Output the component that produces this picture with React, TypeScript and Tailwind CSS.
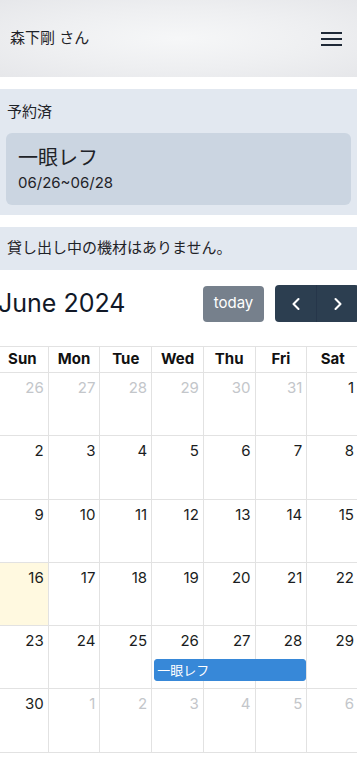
import { ChevronLeft, ChevronRight } from "lucide-react";

const FONT = { fontFamily: "Inter, 'Noto Sans CJK JP', sans-serif" };

type Day = { n: number; muted?: boolean; today?: boolean };

const weeks: Day[][] = [
  [26, 27, 28, 29, 30, 31].map((n) => ({ n, muted: true })).concat([{ n: 1 }]),
  [2, 3, 4, 5, 6, 7, 8].map((n) => ({ n })),
  [9, 10, 11, 12, 13, 14, 15].map((n) => ({ n })),
  [16, 17, 18, 19, 20, 21, 22].map((n) => ({ n, today: n === 16 })),
  [23, 24, 25, 26, 27, 28, 29].map((n) => ({ n })),
  [{ n: 30 }].concat([1, 2, 3, 4, 5, 6].map((n) => ({ n, muted: true }))),
];

const dows = ["Sun", "Mon", "Tue", "Wed", "Thu", "Fri", "Sat"];

function Header() {
  return (
    <header className="flex h-[77px] items-center justify-between bg-[radial-gradient(ellipse_at_center,#f6f7f8_0%,#eeeff1_55%,#e6e7ea_100%)] pl-[10px] pr-[15px]">
      <span className="text-[15px] text-[#1f2328]">森下剛 さん</span>
      <button className="flex flex-col gap-[4px] py-1">
        <span className="block h-[2px] w-[21px] bg-[#1f2937]" />
        <span className="block h-[2px] w-[21px] bg-[#1f2937]" />
        <span className="block h-[2px] w-[21px] bg-[#1f2937]" />
      </button>
    </header>
  );
}

function Calendar() {
  return (
    <div className="ml-[-4px] w-[363px]">
      <div className="flex h-[37px] items-center justify-between pl-[2px]">
        <h2 className="text-[25px] leading-none font-normal text-[#111827]">June 2024</h2>
        <div className="flex items-center gap-[11px]">
          <button className="flex h-[36px] w-[61px] items-center justify-center rounded-[4px] bg-[#76808c] text-[15px] text-white">
            today
          </button>
          <div className="flex h-[37px] overflow-hidden rounded-[4px] bg-[#2c3e50]">
            <button className="flex w-[42px] items-center justify-center border-r border-[#26364a] text-white">
              <ChevronLeft size={20} strokeWidth={2.5} />
            </button>
            <button className="flex w-[42px] items-center justify-center text-white">
              <ChevronRight size={20} strokeWidth={2.5} />
            </button>
          </div>
        </div>
      </div>

      <div className="mt-[24px] border-t border-l border-[#e2e2e2]">
        <div className="grid grid-cols-7">
          {dows.map((d) => (
            <div
              key={d}
              className="flex h-[26px] items-center justify-center border-r border-b border-[#e2e2e2] text-[15px] font-bold text-[#111]"
            >
              {d}
            </div>
          ))}
        </div>
        {weeks.map((w, wi) => (
          <div key={wi} className="grid h-[63.3px] grid-cols-7">
            {w.map((d, di) => (
              <div
                key={di}
                style={{ gridColumnStart: di + 1 }}
                className={`row-start-1 border-r border-b border-[#e2e2e2] pt-[3px] pr-[4px] text-right text-[15px] leading-[24px] ${
                  d.muted ? "text-[#c3c6ca]" : "text-[#1a1d21]"
                } ${d.today ? "bg-[#fff9e0]" : ""}`}
              >
                {d.n}
              </div>
            ))}
            {wi === 4 && (
              <div className="col-start-4 col-span-3 row-start-1 mt-[33px] mr-[1px] ml-[2px] h-[22px] self-start rounded-[3px] border border-[#3788d8] bg-[#3788d8] pl-[2px] text-[13px] leading-[20px] text-white">
                一眼レフ
              </div>
            )}
          </div>
        ))}
      </div>
    </div>
  );
}

export default function App() {
  return (
    <div className="min-h-[763px] w-[357px] overflow-hidden bg-white" style={FONT}>
      <Header />
      <section className="mt-[12px] bg-[#e2e8f0] px-[6px] pt-[12px] pb-[10px]">
        <p className="pl-[1px] text-[15px] leading-[22px] text-[#1f2328]">予約済</p>
        <div className="mt-[10px] h-[72px] rounded-[6px] bg-[#cbd5e1] px-[12px] pt-[12px]">
          <p className="text-[20px] leading-[26px] text-[#1f2328]">一眼レフ</p>
          <p className="mt-[2px] text-[15px] leading-[20px] text-[#1f2328]">06/26~06/28</p>
        </div>
      </section>
      <section className="mt-[12px] flex h-[43px] items-center bg-[#e2e8f0] px-[7px]">
        <p className="text-[15px] text-[#1f2328]">貸し出し中の機材はありません。</p>
      </section>
      <div className="mt-[15px]">
        <Calendar />
      </div>
    </div>
  );
}
